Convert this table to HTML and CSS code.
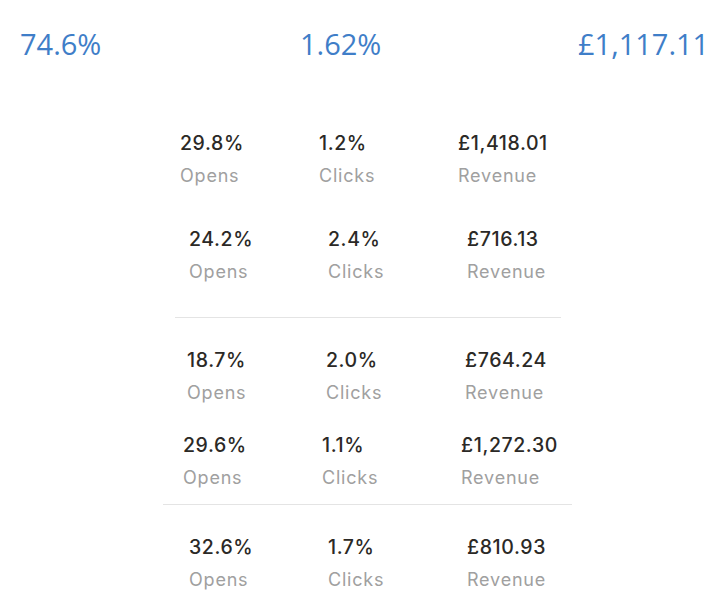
FILE: index.html
```html
<!DOCTYPE html>
<html lang="en">
<head>
<meta charset="utf-8">
<title>Campaign stats</title>
<link rel="stylesheet" href="styles.css">
</head>
<body>
<div class="page">
  <div class="totals">
    <div class="total">74.6%</div>
    <div class="total">1.62%</div>
    <div class="total">£1,117.11</div>
  </div>

  <div class="stat-row r1">
    <div class="stat"><div class="value">29.8%</div><div class="label">Opens</div></div>
    <div class="stat"><div class="value">1.2%</div><div class="label">Clicks</div></div>
    <div class="stat"><div class="value">£1,418.01</div><div class="label">Revenue</div></div>
  </div>
  <div class="stat-row r2">
    <div class="stat"><div class="value">24.2%</div><div class="label">Opens</div></div>
    <div class="stat"><div class="value">2.4%</div><div class="label">Clicks</div></div>
    <div class="stat"><div class="value">£716.13</div><div class="label">Revenue</div></div>
  </div>

  <div class="divider d1"></div>

  <div class="stat-row r3">
    <div class="stat"><div class="value">18.7%</div><div class="label">Opens</div></div>
    <div class="stat"><div class="value">2.0%</div><div class="label">Clicks</div></div>
    <div class="stat"><div class="value">£764.24</div><div class="label">Revenue</div></div>
  </div>
  <div class="stat-row r4">
    <div class="stat"><div class="value">29.6%</div><div class="label">Opens</div></div>
    <div class="stat"><div class="value">1.1%</div><div class="label">Clicks</div></div>
    <div class="stat"><div class="value">£1,272.30</div><div class="label">Revenue</div></div>
  </div>

  <div class="divider d2"></div>

  <div class="stat-row r5">
    <div class="stat"><div class="value">32.6%</div><div class="label">Opens</div></div>
    <div class="stat"><div class="value">1.7%</div><div class="label">Clicks</div></div>
    <div class="stat"><div class="value">£810.93</div><div class="label">Revenue</div></div>
  </div>
</div>
</body>
</html>
```

FILE: styles.css
```css
html, body {
  margin: 0;
  padding: 0;
  background: #ffffff;
}

.page {
  width: 723px;
  height: 605px;
  overflow: hidden;
}

.totals {
  display: grid;
  grid-template-columns: 280px 278px 1fr;
  padding: 24px 14px 0 20px;
  height: 40px;
}

.total {
  font-family: "Open Sans", "Noto Sans", sans-serif;
  font-size: 29px;
  line-height: 40px;
  color: #3f7ec8;
  letter-spacing: 0;
}

.total:last-child {
  text-align: right;
}

.stat-row {
  display: grid;
  grid-template-columns: 139px 139px auto;
}

.value {
  font-family: Inter, "Noto Sans", sans-serif;
  font-weight: 500;
  font-size: 19.5px;
  line-height: 22px;
  letter-spacing: 0.6px;
  color: #2b2926;
}

.label {
  font-family: Inter, "Noto Sans", sans-serif;
  font-weight: 400;
  font-size: 18px;
  line-height: 22px;
  letter-spacing: 0.8px;
  margin-top: 11px;
  color: #a0a0a0;
}

.r1 { margin: 68px 0 0 180px; }
.r2 { margin: 41px 0 0 189px; }
.r3 { margin: 31px 0 0 187px; }
.r4 { margin: 30px 0 0 183px; }
.r5 { margin: 31px 0 0 189px; }

.divider {
  height: 1px;
  background: #e4e4e4;
}

.d1 { margin: 34px 0 0 175px; width: 386px; }
.d2 { margin: 15px 0 0 163px; width: 409px; }
```
